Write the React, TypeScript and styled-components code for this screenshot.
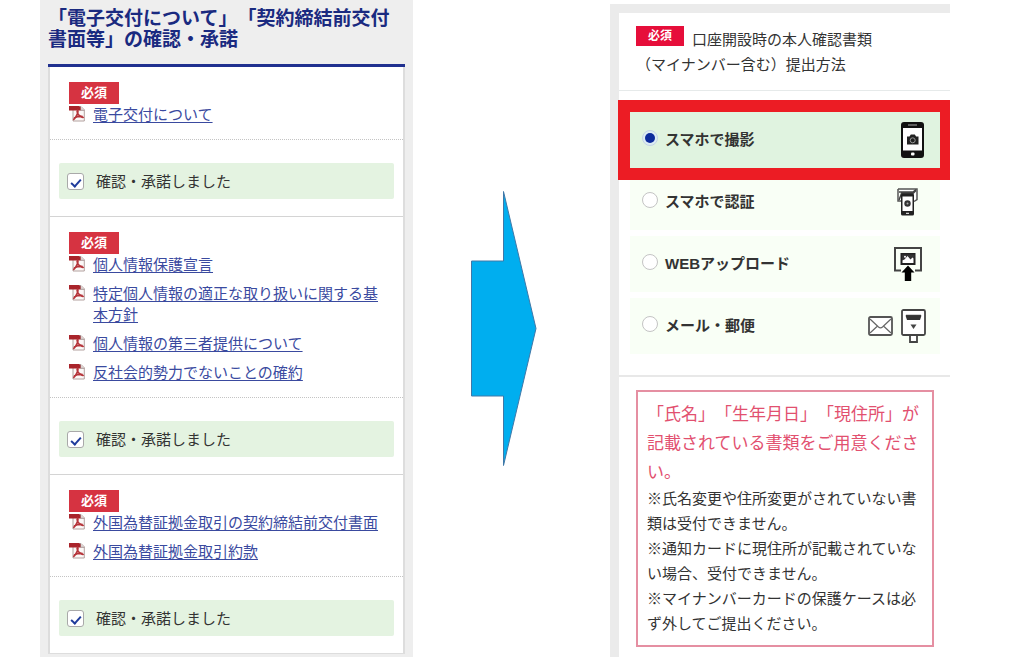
import React, { useState } from "react";
import styled, { createGlobalStyle } from "styled-components";

const GlobalStyle = createGlobalStyle`
  *, *::before, *::after { box-sizing: border-box; }
  body {
    margin: 0;
    background: #fff;
    color: #333;
    font-family: "Noto Sans CJK JP", "Noto Sans", sans-serif;
    font-size: 15px;
    line-height: 21px;
    text-spacing-trim: space-all;
  }
  h1, h2, p, ul { margin: 0; padding: 0; font-weight: 400; }
  ul { list-style: none; }
`;

const Page = styled.main`
  display: grid;
  grid-template-columns: 40fr minmax(0, 373fr) minmax(0, 197fr) minmax(0, 340fr) 74fr;
  min-height: 100vh;
`;

const ConsentPanel = styled.section`
  grid-column: 2;
  padding: 6px 8px 3px;
  background: #eeeeee;
`;

const PanelTitle = styled.h1`
  margin-bottom: 16px;
  color: #1a2a80;
  font-size: 19px;
  font-weight: 700;
  line-height: 21px;
`;

const ConsentCard = styled.div`
  border: solid #dddddd;
  border-width: 0 2px 1px;
  background: #fff;
`;

const TitleRule = styled.div`
  height: 3px;
  background: #20308f;
`;

const DocumentGroup = styled.div`
  padding: 15px 9px 15px 19px;
  border-bottom: 1px dotted #c4c4c4;
`;

const ConsentGroup = styled.div`
  padding: 23px 9px 17px;
  & + ${DocumentGroup} {
    border-top: 1px solid #d4d4d4;
  }
`;

const Badge = styled.span<{ $inline?: boolean }>`
  display: ${(p) => (p.$inline ? "inline-block" : "block")};
  width: ${(p) => (p.$inline ? 48 : 50)}px;
  height: ${(p) => (p.$inline ? 20 : 22)}px;
  margin-right: ${(p) => (p.$inline ? 8 : 0)}px;
  background: ${(p) => (p.$inline ? "#e60e3a" : "#d63341")};
  color: #fff;
  font-size: ${(p) => (p.$inline ? 12 : 13)}px;
  font-weight: 700;
  line-height: ${(p) => (p.$inline ? 18 : 20)}px;
  text-align: center;
  vertical-align: top;
`;

const DocumentList = styled.ul`
  display: flex;
  flex-direction: column;
  gap: 8px;
  margin-top: -1px;
`;

const DocumentItem = styled.li`
  display: flex;
  align-items: flex-start;
  gap: 8px;
  padding-right: 10px;
  svg { flex: none; }
`;

const DocumentLink = styled.a`
  color: #3a4a9f;
  text-decoration: underline;
  text-decoration-thickness: 1px;
  text-underline-offset: 2px;
`;

const ConsentLabel = styled.label`
  display: flex;
  align-items: center;
  gap: 12px;
  height: 36px;
  padding: 0 8px 2px;
  border-radius: 2px;
  background: #e4f3e1;
`;

const Checkbox = styled.input`
  appearance: none;
  display: grid;
  place-items: center;
  flex: none;
  width: 17px;
  height: 17px;
  margin: 3px 0 0;
  border: 1px solid #a9a9a9;
  border-radius: 3px;
  background: #fff;
  &:checked::after {
    content: "";
    width: 6px;
    height: 10px;
    border: solid #1f3c9c;
    border-width: 0 2px 2px 0;
    transform: rotate(42deg);
  }
`;

const ArrowColumn = styled.div`
  grid-column: 3;
  display: flex;
  align-items: center;
  justify-content: center;
  padding-right: 16px;
`;

const MethodPanel = styled.section`
  grid-column: 4;
  margin-top: 4px;
  padding: 9px 0 0 9px;
  background: #ebebeb;
  display: flex;
`;

const MethodCard = styled.div`
  flex: 1;
  min-width: 0;
  background: #fff;
`;

const MethodTitle = styled.h2`
  padding: 13px 17px 14px;
  border-bottom: 1px solid #e6eaea;
  font-size: 15px;
  line-height: 25px;
`;

const OptionList = styled.div`
  display: flex;
  flex-direction: column;
  gap: 6px;
  padding: 21px 10px 21px 11px;
  border-bottom: 2px solid #e8e8e8;
`;

const Option = styled.label<{ $framed?: boolean }>`
  position: relative;
  display: flex;
  align-items: center;
  gap: 7px;
  height: 56px;
  padding: 0 14px 2px 12px;
  background: ${(p) => (p.$framed ? "#e0f3e0" : "#f9fff6")};
  font-family: "Liberation Sans", "Noto Sans CJK JP", sans-serif;
  font-weight: 700;
`;

/* Red frame that overlaps the rows around the highlighted option. */
const HighlightFrame = styled.span`
  position: absolute;
  z-index: 1;
  inset: -12px -10px -12px -12px;
  border: solid #ec1c24;
  border-width: 12px 10px 12px 12px;
  pointer-events: none;
`;

const Radio = styled.input`
  appearance: none;
  display: grid;
  place-items: center;
  flex: none;
  width: 16px;
  height: 16px;
  margin: 0 0 2px;
  border: 1px solid #c4c4c4;
  border-radius: 50%;
  background: #fff;
  &:checked {
    border-color: #c3d3e6;
    background: #dcebf3;
  }
  &:checked::after {
    content: "";
    width: 10px;
    height: 10px;
    border-radius: 50%;
    background: #0c2a9c;
  }
`;

const OptionIcons = styled.span`
  display: flex;
  align-items: center;
  gap: 8px;
  margin: 2px 0 0 auto;
`;

const Notice = styled.div`
  margin: 13px 16px 10px 17px;
  padding: 6px 9px 10px;
  border: 2px solid #e58fa2;
  line-height: 25px;
`;

const NoticeLead = styled.p`
  color: #e2506f;
  font-size: 17px;
  line-height: 29px;
`;

const PdfIcon = () => (
  <svg width="16" height="21" viewBox="0 0 16 21" aria-hidden="true">
    <path d="M4 3.500H12l3.300 3.300v11.200H4z" fill="#fbf8f7" stroke="#b3a29f" />
    <path d="M11.500 3v4.300h4" fill="#ddd5d3" stroke="#a99999" />
    <path d="M0 3h10l1.500 1.500V7.500H0z" fill="#a9242b" />
    <path d="M8 7c1.600 0 .9 3.200-.3 5.400-1 1.900-2.200 3.600-3.500 4.400M8 7.500c.2 2.500 1.700 5 3.600 6 1.300.7 2.700.9 3.100.6M5 15c2.500-1.200 5.700-1.700 8.700-1.500" fill="none" stroke="#b5343a" strokeWidth="1.700" />
  </svg>
);

const PhoneCameraIcon = () => (
  <svg width="27" height="36" viewBox="0 0 27 36" aria-hidden="true">
    <rect x="2" y="0" width="23" height="36" rx="3" fill="#111" />
    <rect x="4" y="6" width="19" height="22.500" fill="#fff" />
    <path d="M9 3h9" stroke="#aaa" strokeWidth="1" />
    <rect x="12" y="30.500" width="3.500" height="3" rx="1" fill="#fff" />
    <path d="M8 14.500h2.500l1.300-2h4l1.300 2h2.400v8H8z" fill="#222" />
    <circle cx="13.700" cy="18.300" r="2.500" fill="none" stroke="#999" />
  </svg>
);

const PhoneScanIcon = () => (
  <svg width="37" height="28" viewBox="0 0 37 28" aria-hidden="true">
    <path d="M9 1h19v10.500l-3 2M9 1v12h3" fill="#fff" stroke="#555" strokeWidth="1.500" />
    <path d="M10 4h14l3-2.500M10 12l2.500-6.500H24l3-3" fill="none" stroke="#444" strokeWidth="1.500" />
    <rect x="12" y="5.500" width="13" height="22" rx="1.500" fill="#222" />
    <rect x="13.500" y="8.500" width="10" height="14.500" fill="#fff" />
    <circle cx="18.500" cy="15.500" r="3.200" fill="#333" />
    <circle cx="18.500" cy="15.500" r="1" fill="#aaa" />
    <path d="M17 25.300h3" stroke="#fff" />
  </svg>
);

const UploadIcon = () => (
  <svg width="36" height="34" viewBox="0 0 36 34" aria-hidden="true">
    <path d="M11 23.500H5V1h26v22.500h-6" fill="none" stroke="#444" strokeWidth="2" />
    <rect x="11.500" y="7" width="13" height="10" fill="#fff" stroke="#222" strokeWidth="2" />
    <path d="M12 7.500h12.500v4.500l-2-1.500-2 2-3-3.500-3 3.500-2.500 1z" fill="#333" />
    <circle cx="15" cy="9.800" r="1" fill="#fff" />
    <path d="M18 18.500l6.500 7h-3.300V34h-6.400v-8.500h-3.300z" fill="#000" />
  </svg>
);

const MailIcon = () => (
  <svg width="25" height="20" viewBox="0 0 25 20" aria-hidden="true">
    <rect x="1" y="1" width="23" height="18" rx="1.500" fill="#fff" stroke="#555" strokeWidth="1.800" />
    <path d="M2 3l8.500 8q2 1.800 4 0L23 3M2 17l7-6.500M23 17l-7-6.500" fill="none" stroke="#666" strokeWidth="1.200" />
  </svg>
);

const PostboxIcon = () => (
  <svg width="25" height="34" viewBox="0 0 25 34" aria-hidden="true">
    <path d="M9 26v7h7V26" fill="#fff" stroke="#444" strokeWidth="1.800" />
    <rect x="1" y="1" width="23" height="25" rx="1.500" fill="#fff" stroke="#444" strokeWidth="1.800" />
    <path d="M4.500 6.500h16l-1.500 4.500H6z" fill="#333" />
    <path d="M5 6.300h15" stroke="#222" />
    <path d="M9.500 15.500h6l-3 4.500z" fill="#444" />
  </svg>
);

const ArrowGraphic = () => (
  <svg width="67" height="281" viewBox="-1 -2 67 281" aria-hidden="true">
    <path
      d="M.5 71H32.500V1.500L65 138.500 32.500 275.500V206H.5z"
      fill="#00aeef"
      stroke="#3f78a8"
      strokeWidth="1"
    />
  </svg>
);

const groups: string[][] = [
  ["電子交付について"],
  [
    "個人情報保護宣言",
    "特定個人情報の適正な取り扱いに関する基本方針",
    "個人情報の第三者提供について",
    "反社会的勢力でないことの確約",
  ],
  ["外国為替証拠金取引の契約締結前交付書面", "外国為替証拠金取引約款"],
];

const methods = [
  { id: "photo", label: "スマホで撮影", icons: <PhoneCameraIcon />, framed: true },
  { id: "auth", label: "スマホで認証", icons: <PhoneScanIcon /> },
  { id: "web", label: "WEBアップロード", icons: <UploadIcon /> },
  { id: "mail", label: "メール・郵便", icons: <><MailIcon /><PostboxIcon /></> },
];

export default function App() {
  const [method, setMethod] = useState("photo");

  return (
    <>
      <GlobalStyle />
      <Page lang="ja">
        <ConsentPanel>
          <PanelTitle>「電子交付について」「契約締結前交付書面等」の確認・承諾</PanelTitle>
          <TitleRule />
          <ConsentCard>
            {groups.map((docs) => (
              <React.Fragment key={docs[0]}>
                <DocumentGroup>
                  <Badge>必須</Badge>
                  <DocumentList>
                    {docs.map((name) => (
                      <DocumentItem key={name}>
                        <PdfIcon />
                        <DocumentLink href="#">{name}</DocumentLink>
                      </DocumentItem>
                    ))}
                  </DocumentList>
                </DocumentGroup>
                <ConsentGroup>
                  <ConsentLabel>
                    <Checkbox type="checkbox" defaultChecked />
                    確認・承諾しました
                  </ConsentLabel>
                </ConsentGroup>
              </React.Fragment>
            ))}
          </ConsentCard>
        </ConsentPanel>

        <ArrowColumn>
          <ArrowGraphic />
        </ArrowColumn>

        <MethodPanel>
          <MethodCard>
            <MethodTitle>
              <Badge $inline>必須</Badge>
              口座開設時の本人確認書類
              <br />
              （マイナンバー含む）提出方法
            </MethodTitle>
            <OptionList role="radiogroup" aria-label="提出方法">
              {methods.map((m) => (
                <Option key={m.id} $framed={m.framed}>
                  <Radio
                    type="radio"
                    name="method"
                    checked={method === m.id}
                    onChange={() => setMethod(m.id)}
                  />
                  {m.label}
                  <OptionIcons>{m.icons}</OptionIcons>
                  {m.framed && <HighlightFrame />}
                </Option>
              ))}
            </OptionList>
            <Notice>
              <NoticeLead>
                「氏名」「生年月日」「現住所」が記載されている書類をご用意ください。
              </NoticeLead>
              <p>※氏名変更や住所変更がされていない書類は受付できません。</p>
              <p>※通知カードに現住所が記載されていない場合、受付できません。</p>
              <p>※マイナンバーカードの保護ケースは必ず外してご提出ください。</p>
            </Notice>
          </MethodCard>
        </MethodPanel>
      </Page>
    </>
  );
}
